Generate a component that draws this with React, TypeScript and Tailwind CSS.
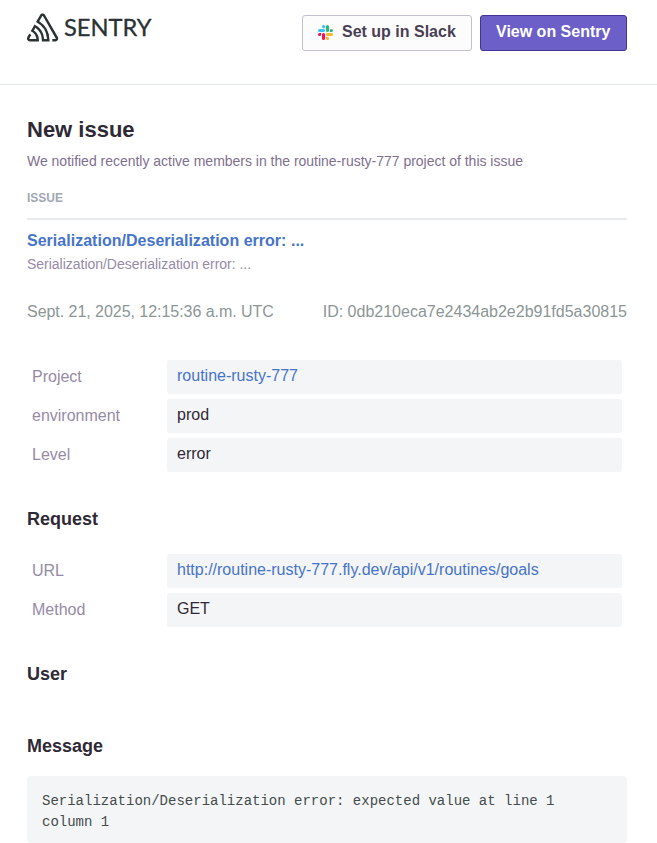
import type { ReactNode } from "react";

function SentryLogo() {
  return (
    <svg width="128" height="32" viewBox="0 0 128 32" role="img" aria-label="Sentry">
      <path
        transform="translate(0 -0.4) scale(1.3 1.32)"
        fill="#2b3233"
        d="M13.91 2.505c-.873-1.448-2.972-1.448-3.844 0L6.904 7.92a15.478 15.478 0 0 1 8.53 12.811h-2.221A13.301 13.301 0 0 0 5.784 9.814l-2.926 5.06a7.65 7.65 0 0 1 4.435 5.848H2.194a.365.365 0 0 1-.298-.534l1.413-2.402a5.16 5.16 0 0 0-1.614-.913L.296 19.275a2.182 2.182 0 0 0 .812 2.999 2.24 2.24 0 0 0 1.086.288h6.983a9.322 9.322 0 0 0-3.845-8.318l1.11-1.922a11.47 11.47 0 0 1 4.95 10.24h5.915a17.242 17.242 0 0 0-7.885-15.28l2.244-3.845a.37.37 0 0 1 .504-.13c.255.14 9.75 16.708 9.928 16.9a.365.365 0 0 1-.327.543h-2.287c.029.612.029 1.223 0 1.831h2.297a2.206 2.206 0 0 0 1.922-3.31z"
      />
      <text
        x="37"
        y="23.7"
        textLength="87.5"
        lengthAdjust="spacingAndGlyphs"
        fill="#2b3233"
        className="font-['Lato',sans-serif] text-[23px]"
        stroke="#2b3233"
        strokeWidth="0.3"
      >
        SENTRY
      </text>
    </svg>
  );
}

const slackArm =
  "M5.042 15.165a2.528 2.528 0 0 1-2.52 2.523A2.528 2.528 0 0 1 0 15.165a2.527 2.527 0 0 1 2.522-2.52h2.52v2.52zM6.313 15.165a2.527 2.527 0 0 1 2.521-2.52 2.527 2.527 0 0 1 2.521 2.52v6.313A2.528 2.528 0 0 1 8.834 24a2.528 2.528 0 0 1-2.521-2.522v-6.313z";

function SlackIcon() {
  return (
    <svg width="15" height="15" viewBox="0 0 24 24" aria-hidden="true">
      <path d={slackArm} fill="#e8175d" />
      <path d={slackArm} fill="#36c5f0" transform="rotate(90 12 12)" />
      <path d={slackArm} fill="#2eb67d" transform="rotate(180 12 12)" />
      <path d={slackArm} fill="#f5b82a" transform="rotate(270 12 12)" />
    </svg>
  );
}

function Row({ label, children }: { label: string; children: ReactNode }) {
  return (
    <div className="flex h-[34px]">
      <dt className="w-[135px] pt-[5px] text-[#968ba6]">{label}</dt>
      <dd className="flex-1 rounded-[3px] bg-[#f4f5f7] px-2.5 pt-1">{children}</dd>
    </div>
  );
}

export default function App() {
  return (
    <div className="h-[843px] overflow-hidden bg-white font-['Liberation_Sans',Arial,sans-serif] text-base leading-6 text-[#2f2936]">
      <header className="flex h-[85px] items-start justify-between border-b border-[#dee7eb] pr-[30px] pl-[27px]">
        <a className="mt-3 block">
          <SentryLogo />
        </a>
        <div className="mt-[15px] flex gap-2 font-bold">
          <a className="flex h-9 w-[170px] rounded-[3px] border border-[#c5bed0] bg-[#fcfcfd] pt-1 pl-[15px] text-[#493e54]">
            <span className="mt-[5px] mr-[9px]">
              <SlackIcon />
            </span>
            Set up in Slack
          </a>
          <a className="h-9 w-[147px] rounded-[3px] border border-[#413496] bg-[#6c5fc7] pt-1 pl-[15px] text-white">
            View on Sentry
          </a>
        </div>
      </header>
      <main className="pr-[30px] pl-[27px]">
        <h2 className="pt-[30px] text-[22px] leading-[30px] font-bold">New issue</h2>
        <p className="mt-[5px] text-sm leading-[22px] tracking-[-0.012px] text-[#80708f]">
          We notified recently active members in the routine-rusty-777 project of this issue
        </p>
        <h3 className="mt-[17px] border-b-2 border-[#e7ebee] pb-[11px] text-xs leading-[18px] font-bold text-[#9fa7b3]">ISSUE</h3>
        <a className="mt-[9px] block font-bold tracking-[0.02px] text-[#4674ca]">Serialization/Deserialization error: ...</a>
        <div className="text-sm leading-[22px] tracking-[-0.02px] text-[#968ba6]">Serialization/Deserialization error: ...</div>
        <div className="mt-[25px] flex justify-between text-[#8b9696]">
          <span className="tracking-[-0.04px]">Sept. 21, 2025, 12:15:36 a.m. UTC</span>
          <span>ID: 0db210eca7e2434ab2e2b91fd5a30815</span>
        </div>
        <dl className="mt-9 flex flex-col gap-[5px] px-[5px]">
          <Row label="Project">
            <a className="text-[#4674ca]">routine-rusty-777</a>
          </Row>
          <Row label="environment">prod</Row>
          <Row label="Level">error</Row>
        </dl>
        <h3 className="mt-[35px] text-lg leading-6 font-bold">Request</h3>
        <dl className="mt-[23px] flex flex-col gap-[5px] px-[5px]">
          <Row label="URL">
            <a className="text-[#4674ca]">http://routine-rusty-777.fly.dev/api/v1/routines/goals</a>
          </Row>
          <Row label="Method">GET</Row>
        </dl>
        <h3 className="mt-[35px] text-lg leading-6 font-bold">User</h3>
        <h3 className="mt-12 text-lg leading-6 font-bold">Message</h3>
        <pre className="mt-[18px] h-[67px] rounded bg-[#f4f5f7] px-[15px] pt-[15px] font-['Liberation_Mono',monospace] text-sm leading-[21px] whitespace-pre-wrap text-[#444c4c]">
          Serialization/Deserialization error: expected value at line 1 column 1
        </pre>
      </main>
    </div>
  );
}
